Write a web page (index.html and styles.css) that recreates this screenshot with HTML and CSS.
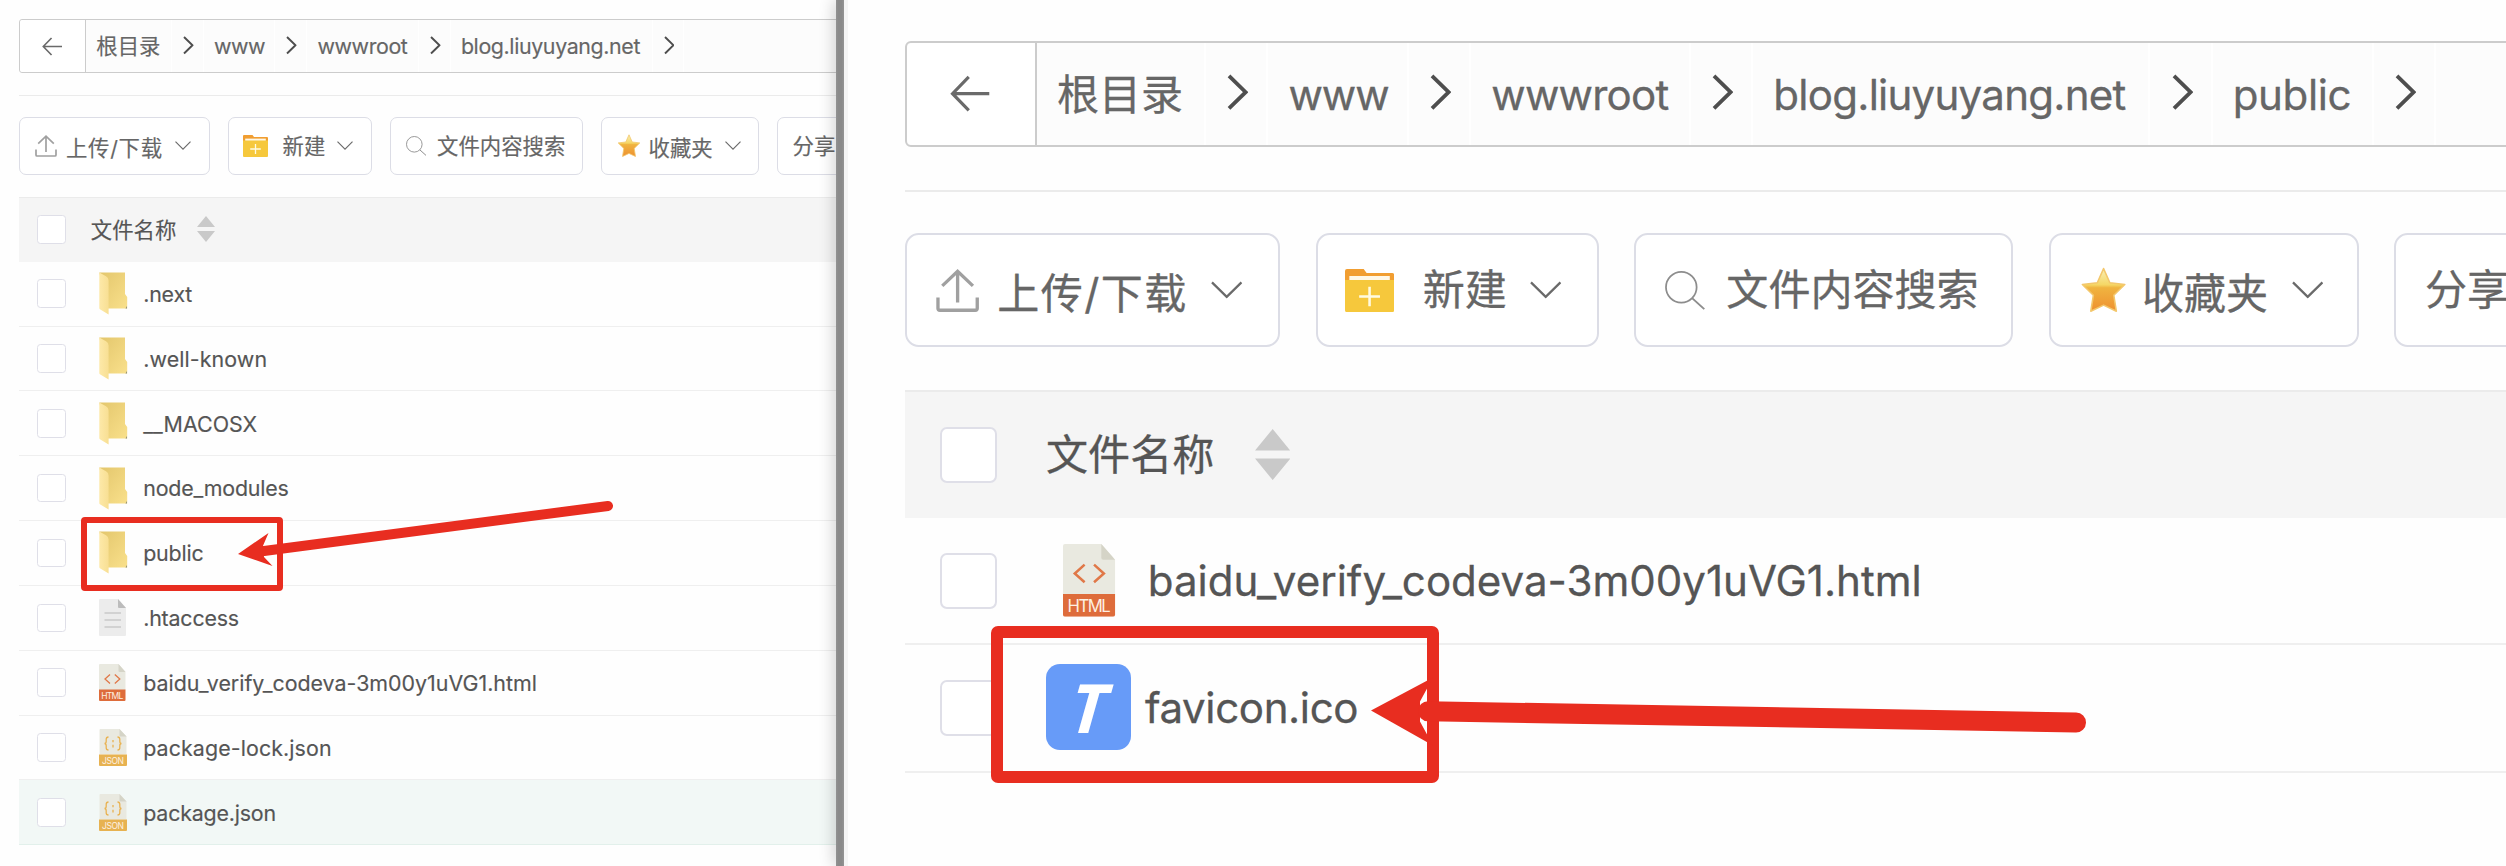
FILE: index.html
```html
<!DOCTYPE html>
<html lang="zh-CN">
<head>
<meta charset="utf-8">
<title>文件管理</title>
<link rel="stylesheet" href="styles.css">
</head>
<body>
<svg class="defs" width="0" height="0" aria-hidden="true">
  <defs>
    <linearGradient id="gFlap" x1="0" y1="0" x2="1" y2="0"><stop offset="0" stop-color="#fde9a9"/><stop offset="1" stop-color="#f8df93"/></linearGradient>
    <linearGradient id="gBack" x1="0" y1="0" x2="1" y2="1"><stop offset="0" stop-color="#e3c66c"/><stop offset="1" stop-color="#f9e08b"/></linearGradient>
    <linearGradient id="gStar" x1="0" y1="0" x2="0" y2="1"><stop offset="0" stop-color="#f9f0b8"/><stop offset=".38" stop-color="#f5d765"/><stop offset=".45" stop-color="#f0b440"/><stop offset="1" stop-color="#ee9030"/></linearGradient>
    <symbol id="back" viewBox="0 0 22 20"><path d="M21 10H1.5M10 1 1.3 10l8.7 9" fill="none" stroke="#6a6a6a" stroke-width="1.7"/></symbol>
    <symbol id="next" viewBox="0 0 11 19"><path d="M1 1l8.7 8.5L1 18" fill="none" stroke="#4e4e4e" stroke-width="2"/></symbol>
    <symbol id="down" viewBox="0 0 16 9"><path d="M.5.7 8 8.1 15.5.7" fill="none" stroke="#6a6a6a" stroke-width="1.15"/></symbol>
    <symbol id="upload" viewBox="0 0 22 22"><path d="M11 17V1.3M3.2 8.6 11 1.2l7.800 7.400M1 14.500V20q0 1 1 1h18q1 0 1-1V14.500" fill="none" stroke="#a0a0a0" stroke-width="1.7"/></symbol>
    <symbol id="newdir" viewBox="0 0 25 22"><path d="M0 1Q0 0 1 0h8.500l1.500 2h13q1 0 1 1v4H0z" fill="#f19e31"/><path d="M2.200 3.600h20.600v3H2.200z" fill="#fff8e6"/><path d="M0 5.600h1.800h21.400H25V21q0 1-1 1H1q-1 0-1-1z" fill="#f6c83c"/><path d="M7.200 14h10.600M12.500 9v10" stroke="#fffbe2" stroke-width="1.300"/></symbol>
    <symbol id="search" viewBox="0 0 21 20"><circle cx="8.300" cy="8.300" r="7.800" fill="none" stroke="#8d8d8d" stroke-width=".9"/><path d="M13.800 13.800l6.200 5.600" stroke="#8d8d8d" stroke-width="1"/></symbol>
    <symbol id="star" viewBox="0 0 24 24"><path d="M12 .8l3.200 7.200 7.600.9-5.600 5.500 1.300 8.100L12 19.400l-6.500 3.100 1.300-8.100L1.200 8.900l7.600-.9z" fill="url(#gStar)" stroke="#f3c76c" stroke-width=".8" stroke-linejoin="round"/></symbol>
    <symbol id="sort" viewBox="0 0 18 26"><path d="M9 0l9 11H0zM9 26l9-11H0z" fill="#c9c9c9"/></symbol>
    <symbol id="folder" viewBox="0 0 29 43"><path d="M.3.500h25.700v21.500l2.200 3v11.500H8.500z" fill="url(#gBack)"/><path d="M28 34v2.600h-1.500z" fill="#8d8d76"/><path d="M.3.500 7 4.300q2.600 1.500 2.600 4.200V42.500L1.300 37.500Q.3 37 .3 36z" fill="url(#gFlap)"/></symbol>
    <symbol id="file" viewBox="0 0 27 37"><path d="M1 0h18l8 9v27q0 1-1 1H1q-1 0-1-1V1q0-1 1-1z" fill="#ececec"/><path d="M19 0l8 9h-7q-1 0-1-1z" fill="#bcbcbc"/><path d="M5.500 14h16.500M5.500 21h16.500M5.500 28h16.500" stroke="#c9c9c9" stroke-width="1.500"/></symbol>
    <symbol id="html" viewBox="0 0 27 37"><path d="M1 0h18.500l7 8v18H0V1q0-1 1-1z" fill="#e9e9e0"/><path d="M19.500 0l7 8h-6q-1 0-1-1z" fill="#d5d4c7"/><path d="M0 25.500h26.500V36q0 1-1 1H1q-1 0-1-1z" fill="#de6c3b"/><path d="M11 10.500l-5 4.500 5 4.500M15.800 10.500l5 4.500-5 4.500" fill="none" stroke="#e07848" stroke-width="1.300"/><text x="13.300" y="34.800" class="tag" textLength="22">HTML</text></symbol>
    <symbol id="json" viewBox="0 0 28 37"><path d="M1.500 0h19l7 7.500v18H.5V1q0-1 1-1z" fill="#e9e9e0"/><path d="M20.500 0l7 7.500h-6q-1 0-1-1z" fill="#d5d4c7"/><path d="M0 25.500h28V36q0 1-1 1H1q-1 0-1-1z" fill="#e7b251"/><path d="M9.500 8q-2.300 0-2.300 2.300v2q0 2.200-1.700 2.200 1.700 0 1.700 2.200v2q0 2.300 2.300 2.300M18.500 8q2.300 0 2.300 2.300v2q0 2.200 1.700 2.200-1.700 0-1.700 2.200v2q0 2.300-2.300 2.300M14 11v2.200M14 15.800v2.700" fill="none" stroke="#e9b251" stroke-width="1.300"/><text x="14" y="34.600" class="tag" textLength="22">JSON</text></symbol>
  </defs>
</svg>

<main class="compare">
  <section class="panel panel-site">
    <nav class="path">
      <a class="back"><svg class="i-back"><use href="#back"/></svg></a>
      <span class="crumb c-root">根目录</span><i class="sep"><svg class="i-next"><use href="#next"/></svg></i>
      <span class="crumb c-www">www</span><i class="sep"><svg class="i-next"><use href="#next"/></svg></i>
      <span class="crumb c-wwwroot">wwwroot</span><i class="sep"><svg class="i-next"><use href="#next"/></svg></i>
      <span class="crumb c-blog">blog.liuyuyang.net</span><i class="sep"><svg class="i-next"><use href="#next"/></svg></i>
    </nav>
    <div class="tools">
      <div class="btn b-up"><svg class="i-upload"><use href="#upload"/></svg><span>上传/下载</span><svg class="i-down"><use href="#down"/></svg></div>
      <div class="btn b-new"><svg class="i-newdir"><use href="#newdir"/></svg><span>新建</span><svg class="i-down"><use href="#down"/></svg></div>
      <div class="btn b-find"><svg class="i-search"><use href="#search"/></svg><span>文件内容搜索</span></div>
      <div class="btn b-fav"><svg class="i-star"><use href="#star"/></svg><span>收藏夹</span><svg class="i-down"><use href="#down"/></svg></div>
      <div class="btn b-share"><span>分享</span></div>
    </div>
    <div class="table">
      <div class="head"><i class="box"></i><span>文件名称</span><svg class="i-sort"><use href="#sort"/></svg></div>
      <div class="row"><i class="box"></i><span class="ico"><svg class="i-folder"><use href="#folder"/></svg></span><span class="name">.next</span></div>
      <div class="row"><i class="box"></i><span class="ico"><svg class="i-folder"><use href="#folder"/></svg></span><span class="name dashed">.well-known</span></div>
      <div class="row"><i class="box"></i><span class="ico"><svg class="i-folder"><use href="#folder"/></svg></span><span class="name caps">__MACOSX</span></div>
      <div class="row"><i class="box"></i><span class="ico"><svg class="i-folder"><use href="#folder"/></svg></span><span class="name">node_modules</span></div>
      <div class="row"><i class="box"></i><span class="ico"><svg class="i-folder"><use href="#folder"/></svg></span><span class="name">public</span></div>
      <div class="row"><i class="box"></i><span class="ico"><svg class="i-file"><use href="#file"/></svg></span><span class="name">.htaccess</span></div>
      <div class="row"><i class="box"></i><span class="ico"><svg class="i-file"><use href="#html"/></svg></span><span class="name long">baidu_verify_codeva-3m00y1uVG1.html</span></div>
      <div class="row"><i class="box"></i><span class="ico"><svg class="i-json"><use href="#json"/></svg></span><span class="name dashed">package-lock.json</span></div>
      <div class="row active"><i class="box"></i><span class="ico"><svg class="i-json"><use href="#json"/></svg></span><span class="name">package.json</span></div>
    </div>
  </section>

  <div class="divider"></div>

  <section class="panel panel-public">
    <nav class="path">
      <a class="back"><svg class="i-back"><use href="#back"/></svg></a>
      <span class="crumb c-root">根目录</span><i class="sep"><svg class="i-next"><use href="#next"/></svg></i>
      <span class="crumb c-www">www</span><i class="sep"><svg class="i-next"><use href="#next"/></svg></i>
      <span class="crumb c-wwwroot">wwwroot</span><i class="sep"><svg class="i-next"><use href="#next"/></svg></i>
      <span class="crumb c-blog">blog.liuyuyang.net</span><i class="sep"><svg class="i-next"><use href="#next"/></svg></i>
      <span class="crumb c-public">public</span><i class="sep"><svg class="i-next"><use href="#next"/></svg></i>
    </nav>
    <div class="tools">
      <div class="btn b-up"><svg class="i-upload"><use href="#upload"/></svg><span>上传/下载</span><svg class="i-down"><use href="#down"/></svg></div>
      <div class="btn b-new"><svg class="i-newdir"><use href="#newdir"/></svg><span>新建</span><svg class="i-down"><use href="#down"/></svg></div>
      <div class="btn b-find"><svg class="i-search"><use href="#search"/></svg><span>文件内容搜索</span></div>
      <div class="btn b-fav"><svg class="i-star"><use href="#star"/></svg><span>收藏夹</span><svg class="i-down"><use href="#down"/></svg></div>
      <div class="btn b-share"><span>分享</span></div>
    </div>
    <div class="table">
      <div class="head"><i class="box"></i><span>文件名称</span><svg class="i-sort"><use href="#sort"/></svg></div>
      <div class="row"><i class="box"></i><span class="ico"><svg class="i-file"><use href="#html"/></svg></span><span class="name long">baidu_verify_codeva-3m00y1uVG1.html</span></div>
      <div class="row"><i class="box"></i><span class="favicon"><b>T</b></span><span class="name">favicon.ico</span></div>
    </div>
  </section>

  <svg class="marks" viewBox="0 0 2506 866">
    <rect x="84" y="520" width="196" height="68" rx="1" stroke-width="6"/>
    <path class="solid" d="M238 554l30.500-21-5.500 12.700 1 11.300 8.500 9z"/>
    <path class="line" stroke-width="10" d="M264 551L608 506"/>
    <rect x="997" y="632" width="436" height="145" rx="1" stroke-width="12"/>
    <path class="solid" d="M1371 710.500l62-33-13 24v20l13 24z"/>
    <path class="line" stroke-width="20" d="M1428 711.200L2076 722.500"/>
  </svg>
</main>
</body>
</html>
```

FILE: styles.css
```css
* { box-sizing: border-box; }
body { margin: 0; background: #fefefe; }
.defs { position: absolute; }
svg { display: block; flex: none; }
i { font-style: normal; }

.compare {
  position: relative;
  display: flex;
  width: 2506px;
  height: 866px;
  overflow: hidden;
  font-family: Inter, "Noto Sans CJK SC", sans-serif;
}

/* every measure inside a panel is a multiple of its unit */
.panel {
  --u: 1px;
  --line: 1px;
  overflow: hidden;
  background: #fefefe;
  color: #666;
  font-size: calc(var(--u) * 21.4);
  -webkit-text-stroke: calc(var(--u) * .15) currentColor;
  white-space: nowrap;
}
.panel-site { width: 836px; padding: 19px 0 0 19px; }
.panel-public {
  --u: 1.965px;
  --line: 2px;
  position: relative;
  width: 1662px;
  padding: 41px 0 0 61px;
  box-shadow: inset 4px 0 0 #f5f5f5;
}

.divider {
  position: relative;
  width: 8px;
  background: linear-gradient(90deg, #929292, #8a8a8a 30%, #8a8a8a 70%, #949494);
  box-shadow: 0 0 16px rgba(0, 0, 0, .3), 3px 0 2px rgba(0, 0, 0, .05);
}

.path {
  display: flex;
  width: calc(var(--u) * 900);
  height: calc(var(--u) * 54);
  background: #fcfcfc;
  border: var(--line) solid #ccc;
  border-radius: calc(var(--u) * 3);
}
.back {
  display: flex;
  align-items: center;
  justify-content: center;
  flex: none;
  width: calc(var(--u) * 66);
  background: #fff;
  border-right: var(--line) solid #ccc;
  border-radius: calc(var(--u) * 3) 0 0 calc(var(--u) * 3);
}
.crumb {
  flex: none;
  padding-left: calc(var(--u) * 10.3);
  line-height: calc(var(--u) * 52.5);
  border-right: var(--line) solid #fff;
}
.c-root { width: calc(var(--u) * 86); }
.c-www { width: calc(var(--u) * 71.5); letter-spacing: calc(var(--u) * -.5); }
.c-wwwroot { width: calc(var(--u) * 111.7); letter-spacing: calc(var(--u) * -.4); }
.c-blog { width: calc(var(--u) * 202); letter-spacing: calc(var(--u) * -.38); }
.c-public { width: calc(var(--u) * 82); letter-spacing: calc(var(--u) * -.2); }
.sep {
  flex: none;
  width: calc(var(--u) * 31.8);
  padding: calc(var(--u) * 16) 0 0 calc(var(--u) * 11);
  border-right: var(--line) solid #fff;
}

.tools {
  display: flex;
  gap: calc(var(--u) * 18);
  width: calc(var(--u) * 900);
  margin-top: calc(var(--u) * 22);
  padding: calc(var(--u) * 20.800) 0 calc(var(--u) * 21.900);
  border-top: var(--line) solid #ebebeb;
}
.btn {
  display: flex;
  flex: none;
  align-items: center;
  height: calc(var(--u) * 58);
  padding-left: calc(var(--u) * 15);
  background: #fff;
  border: var(--line) solid #dcdde6;
  border-radius: calc(var(--u) * 7);
}
.btn span { line-height: calc(var(--u) * 32); }
.b-up { width: calc(var(--u) * 191); }
.b-up span { margin: calc(var(--u) * 4) calc(var(--u) * 12) 0 calc(var(--u) * 9); letter-spacing: calc(var(--u) * .7); }
.b-new { width: calc(var(--u) * 144); padding-left: calc(var(--u) * 14); }
.b-new span { margin: 0 calc(var(--u) * 12) 0 calc(var(--u) * 14.5); }
.b-find { width: calc(var(--u) * 193); }
.b-find span { margin: 0 0 0 calc(var(--u) * 10); }
.b-fav { width: calc(var(--u) * 158); }
.b-fav span { margin: calc(var(--u) * 4) calc(var(--u) * 12) 0 calc(var(--u) * 7.500); }
.b-share { width: calc(var(--u) * 120); padding-left: calc(var(--u) * 14.500); }

.table { width: calc(var(--u) * 900); color: #555; }
.head, .row { display: flex; align-items: center; padding-left: calc(var(--u) * 18); }
.head {
  height: calc(var(--u) * 65);
  background: #f5f5f5;
  border-top: var(--line) solid #ebebeb;
}
.head .box { margin-bottom: calc(var(--u) * .5); }
.head svg { margin-bottom: calc(var(--u) * 1); }
.head span { margin: 0 calc(var(--u) * 20.500) 0 calc(var(--u) * 25); line-height: calc(var(--u) * 32); }
.row { height: calc(var(--u) * 64.85); border-bottom: var(--line) solid #efefef; }
.row.active { background: #f2f8f6; border-color: #e2f0eb; }
.box {
  flex: none;
  width: calc(var(--u) * 28.8);
  height: calc(var(--u) * 28.5);
  background: #fff;
  border: var(--line) solid #dfdfe8;
  border-radius: calc(var(--u) * 3.500);
}
.ico { width: calc(var(--u) * 77.4); padding-left: calc(var(--u) * 33.7); flex: none; }
.name { line-height: calc(var(--u) * 32); padding-top: calc(var(--u) * .5); letter-spacing: calc(var(--u) * -.19); }
.name.dashed { letter-spacing: calc(var(--u) * .1); }
.name.long { letter-spacing: calc(var(--u) * 0); }
.name.caps { letter-spacing: calc(var(--u) * .05); }
.panel-public .ico { width: calc(var(--u) * 76.8); }

.favicon {
  display: flex;
  align-items: center;
  justify-content: center;
  width: 85px;
  height: 86px;
  margin: -3px 14px 0 49px;
  background: #679bf8;
  border-radius: 14px;
  color: #fff;
}
.favicon b { font: italic 700 68px/1 "Open Sans", sans-serif; transform: translate(1px, 0) skewX(-4deg); -webkit-text-stroke: 0; }

.i-back { width: calc(var(--u) * 21); height: calc(var(--u) * 19); }
.i-next { width: calc(var(--u) * 10.800); height: calc(var(--u) * 18.500); }
.i-down { width: calc(var(--u) * 16); height: calc(var(--u) * 9); }
.i-upload { width: calc(var(--u) * 22); height: calc(var(--u) * 22); }
.i-newdir { width: calc(var(--u) * 25); height: calc(var(--u) * 22); }
.i-search { width: calc(var(--u) * 21); height: calc(var(--u) * 20); }
.i-star { width: calc(var(--u) * 24); height: calc(var(--u) * 24); }
.i-sort { width: calc(var(--u) * 18); height: calc(var(--u) * 26); }
.i-folder { width: calc(var(--u) * 29); height: calc(var(--u) * 43); }
.i-file { width: calc(var(--u) * 27); height: calc(var(--u) * 37); }
.i-json { width: calc(var(--u) * 28); height: calc(var(--u) * 37); }
.tag { font: 8.500px Inter, sans-serif; fill: #fdf0e2; text-anchor: middle; -webkit-text-stroke: 0; }

.marks { position: absolute; inset: 0; width: 2506px; height: 866px; fill: none; stroke: #e82d20; stroke-linejoin: round; }
.marks .solid { fill: #e82d20; stroke: none; }
.marks .line { stroke-linecap: round; }
```
